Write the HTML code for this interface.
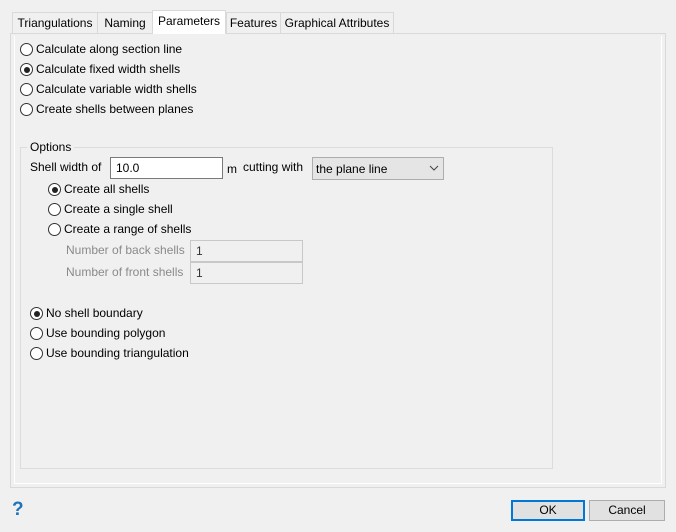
<!DOCTYPE html>
<html><head><style>
*{box-sizing:border-box;margin:0;padding:0}
body{width:676px;height:532px;background:#f0f0f0;font-family:"Liberation Sans",sans-serif;font-size:12px;color:#000;position:relative;overflow:hidden}
.a{position:absolute;white-space:nowrap}
.tab{position:absolute;top:12px;height:21px;border:1px solid #d9d9d9;border-bottom:none;background:#f0f0f0;padding-top:3px;text-align:center}
.r{position:absolute;width:13px;height:13px;border:1px solid #333;border-radius:50%;background:#fff}
.r.on::after{content:"";position:absolute;left:2.5px;top:2.5px;width:6px;height:6px;border-radius:50%;background:#222}
.t{position:absolute;white-space:nowrap;line-height:14px}
.g{color:#8a8a8a}
.box{position:absolute;border:1px solid #c8c8c8}
</style></head><body>
<div class="a" style="left:10px;top:33px;width:656px;height:455px;border:1px solid #d9d9d9;background:#f0f0f0"></div>
<div class="a" style="left:14px;top:36px;width:648px;height:448px;border:1px solid #fff;border-top:none"></div>
<div class="tab" style="left:12px;width:86px">Triangulations</div>
<div class="tab" style="left:97px;width:56px">Naming</div>
<div class="tab" style="left:226px;width:55px">Features</div>
<div class="tab" style="left:280px;width:114px">Graphical Attributes</div>
<div class="tab" style="left:152px;top:10px;height:24px;width:74px;background:#fff;padding-top:3px">Parameters</div>

<div class="r" style="left:20px;top:43px"></div><div class="t" style="left:36px;top:42px">Calculate along section line</div>
<div class="r on" style="left:20px;top:63px"></div><div class="t" style="left:36px;top:62px">Calculate fixed width shells</div>
<div class="r" style="left:20px;top:83px"></div><div class="t" style="left:36px;top:82px">Calculate variable width shells</div>
<div class="r" style="left:20px;top:103px"></div><div class="t" style="left:36px;top:102px">Create shells between planes</div>

<div class="a" style="left:20px;top:147px;width:533px;height:322px;border:1px solid #dcdcdc"></div>
<div class="t" style="left:27px;top:140px;background:#f0f0f0;padding:0 3px">Options</div>
<div class="t" style="left:30px;top:160px">Shell width of</div>
<div class="box" style="left:110px;top:157px;width:113px;height:22px;background:#fff;border-color:#7a7a7a"></div>
<div class="t" style="left:116px;top:161px">10.0</div>
<div class="t" style="left:227px;top:162px">m</div>
<div class="t" style="left:243px;top:160px">cutting with</div>
<div class="box" style="left:312px;top:157px;width:132px;height:23px;background:#e5e5e5;border-color:#adadad"></div>
<div class="t" style="left:316px;top:162px">the plane line</div>
<svg class="a" style="left:429px;top:165px" width="10" height="6"><path d="M1 1L5 5L9 1" stroke="#444" fill="none"/></svg>

<div class="r on" style="left:48px;top:183px"></div><div class="t" style="left:64px;top:182px">Create all shells</div>
<div class="r" style="left:48px;top:203px"></div><div class="t" style="left:64px;top:202px">Create a single shell</div>
<div class="r" style="left:48px;top:223px"></div><div class="t" style="left:64px;top:222px">Create a range of shells</div>
<div class="t g" style="left:66px;top:243px">Number of back shells</div>
<div class="box" style="left:190px;top:240px;width:113px;height:22px;background:#f0f0f0"></div>
<div class="t" style="left:196px;top:244px;color:#333">1</div>
<div class="t g" style="left:66px;top:265px">Number of front shells</div>
<div class="box" style="left:190px;top:262px;width:113px;height:22px;background:#f0f0f0"></div>
<div class="t" style="left:196px;top:266px;color:#333">1</div>

<div class="r on" style="left:30px;top:307px"></div><div class="t" style="left:46px;top:306px">No shell boundary</div>
<div class="r" style="left:30px;top:327px"></div><div class="t" style="left:46px;top:326px">Use bounding polygon</div>
<div class="r" style="left:30px;top:347px"></div><div class="t" style="left:46px;top:346px">Use bounding triangulation</div>

<div class="t" style="left:12px;top:500px;font-size:19px;font-weight:bold;color:#1e73be;line-height:20px">?</div>
<div class="a" style="left:511px;top:500px;width:74px;height:21px;border:2px solid #0078d7;background:#e1e1e1;text-align:center;line-height:17px">OK</div>
<div class="a" style="left:589px;top:500px;width:76px;height:21px;border:1px solid #adadad;background:#e1e1e1;text-align:center;line-height:19px">Cancel</div>
</body></html>
